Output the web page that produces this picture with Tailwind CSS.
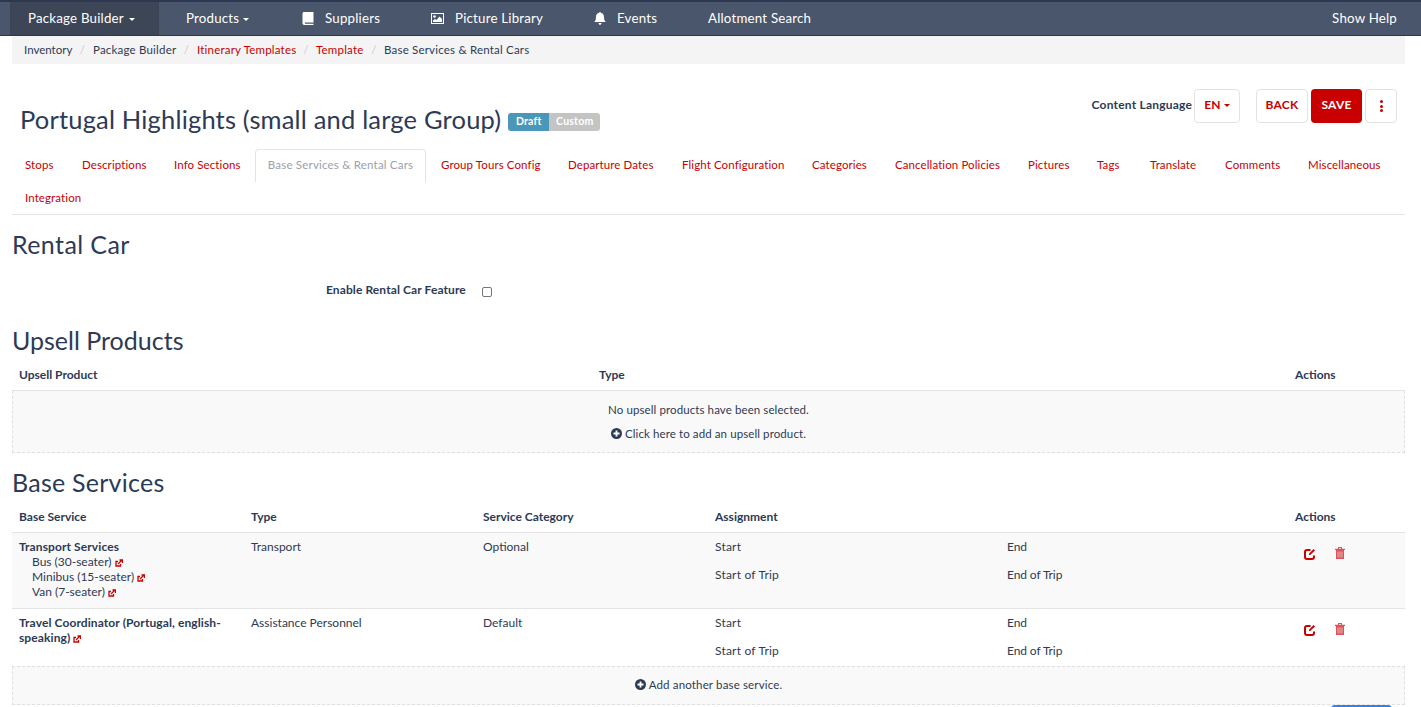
<!DOCTYPE html>
<html lang="en"><head><meta charset="utf-8">
<script src="https://cdn.jsdelivr.net/npm/@tailwindcss/browser@4"></script>
<title>Portugal Highlights</title></head>
<body class="m-0 bg-white overflow-hidden font-['Lato','Noto_Sans',sans-serif] text-[#2d3a55] text-[12px]">
<div class="relative h-[707px] w-[1421px] overflow-hidden">
<nav class="h-[36px] flex items-stretch pl-[10px] pr-[24px] bg-[#4a566b] border-t-2 border-t-[#2c3850] border-b border-b-[#2c3850] text-white text-[13.300px] tracking-[0.2px]">
  <a class="w-[149px] pl-[18px] flex items-center gap-[5px] bg-[#3d4657]">Package Builder <span class="border-x-[3px] border-x-transparent border-t-[3px] border-t-white mt-[2px]"></span></a>
  <a class="w-[118px] pl-[27px] flex items-center gap-[4px]">Products <span class="border-x-[3px] border-x-transparent border-t-[3px] border-t-white mt-[2px]"></span></a>
  <a class="w-[129px] pl-[25px] flex items-center gap-[11px]"><svg class="w-[12px] h-[13px]" viewBox="0 0 12 13"><path fill="#fff" d="M2 0h9.500v10.500H3a1 1 0 0 0 0 1.200h8.500V13H2.500C1 13 .5 12 .5 11V1.500C.5.700 1.200 0 2 0z"/></svg>Suppliers</a>
  <a class="w-[163px] pl-[25px] flex items-center gap-[11px]"><svg class="w-[13px] h-[11px]" viewBox="0 0 13 11"><path fill="#fff" fill-rule="evenodd" d="M0 0h13v11H0zM1 1v9h11V1z"/><circle cx="3.500" cy="3.500" r="1.300" fill="#fff"/><path fill="#fff" d="M2 9V7.500l2-1.500 1.500 1 3-3.500L11 6v3z"/></svg>Picture Library</a>
  <a class="w-[114px] pl-[25px] flex items-center gap-[11px]"><svg class="w-[12px] h-[13px]" viewBox="0 0 12 13"><path fill="#fff" d="M6 0c.5 0 .8.400.8.800C9 1.200 10 3 10 5c0 3 .8 4 1.800 5H.2C1.200 9 2 8 2 5c0-2 1-3.800 3.200-4.200C5.200.4 5.500 0 6 0zM4.500 11h3C7.500 12 6.800 12.800 6 12.800S4.500 12 4.500 11z"/></svg>Events</a>
  <a class="pl-[25px] flex items-center">Allotment Search</a>
  <a class="ml-auto flex items-center">Show Help</a>
</nav>
<main class="px-[12px] w-[1417px]">
  <ol class="h-[28px] bg-[#f4f4f4] flex items-center pl-[12px] text-[11.500px] tracking-[0.2px] whitespace-nowrap">
    <li class="w-[48px] tracking-[0px]">Inventory</li><li class="text-[#ccc] w-[21px] text-center">/</li>
    <li class="w-[83px]">Package Builder</li><li class="text-[#ccc] w-[21px] text-center">/</li>
    <li class="w-[99px] text-[#c80000]">Itinerary Templates</li><li class="text-[#ccc] w-[20px] text-center">/</li>
    <li class="w-[48px] text-[#c80000]">Template</li><li class="text-[#ccc] w-[20px] text-center">/</li>
    <li>Base Services &amp; Rental Cars</li>
  </ol>
  <header class="h-[85px] flex items-start pl-[8px] pr-[8px]">
    <div class="flex items-center mt-[37px] h-[36px]">
      <h1 class="text-[25.500px] leading-[36px] font-normal tracking-[0.18px]">Portugal Highlights (small and large Group)</h1>
      <span class="ml-[7px] mt-[6px] h-[18px] w-[41px] flex items-center justify-center bg-[#4a97b9] text-white font-bold text-[10.500px] tracking-[0.2px] rounded-l-[3px]">Draft</span>
      <span class="mt-[6px] h-[18px] w-[51px] flex items-center justify-center bg-[#c4c4c4] text-white font-bold text-[10.500px] tracking-[0.2px] rounded-r-[3px]">Custom</span>
    </div>
    <div class="ml-auto flex items-center mt-[25px] h-[34px] font-bold tracking-[0.2px]">
      <span class="mr-[2px] pb-[2px]">Content Language</span>
      <span class="w-[46px] h-[34px] pb-[2px] flex items-center justify-center gap-[3px] border border-[#e3e3e3] rounded-[4px] text-[#c80000]">EN <span class="border-x-[3px] border-x-transparent border-t-[3px] border-t-[#c80000]"></span></span>
      <span class="ml-[16px] w-[52px] h-[34px] pb-[2px] flex items-center justify-center border border-[#e3e3e3] rounded-[4px] text-[#c80000]">BACK</span>
      <span class="ml-[3px] w-[51px] h-[34px] pb-[2px] flex items-center justify-center bg-[#c80000] rounded-[4px] text-white">SAVE</span>
      <span class="ml-[3px] w-[32px] h-[34px] flex flex-col items-center justify-center gap-[1.500px] border border-[#e3e3e3] rounded-[4px]"><i class="w-[3px] h-[3px] rounded-full bg-[#c80000]"></i><i class="w-[3px] h-[3px] rounded-full bg-[#c80000]"></i><i class="w-[3px] h-[3px] rounded-full bg-[#c80000]"></i></span>
    </div>
  </header>
  <ul class="flex flex-wrap border-b border-[#e4e4e4] text-[#c80000] text-[11.500px] tracking-[0.1px] h-[66px] content-start">
    <li class="w-[70px] h-[33px] pb-[2px] pl-[13px] flex items-center">Stops</li>
    <li class="w-[92px] h-[33px] pb-[2px] flex items-center">Descriptions</li>
    <li class="w-[81px] h-[33px] pb-[2px] flex items-center">Info Sections</li>
    <li class="w-[171px] h-[33px] pb-[2px] flex items-center justify-center border border-b-0 border-[#e4e4e4] rounded-t-[4px] text-[#9aa0ac] bg-white tracking-[0.2px]">Base Services &amp; Rental Cars</li>
    <li class="w-[142px] h-[33px] pb-[2px] pl-[15px] flex items-center">Group Tours Config</li>
    <li class="w-[114px] h-[33px] pb-[2px] flex items-center">Departure Dates</li>
    <li class="w-[130px] h-[33px] pb-[2px] flex items-center">Flight Configuration</li>
    <li class="w-[83px] h-[33px] pb-[2px] flex items-center">Categories</li>
    <li class="w-[133px] h-[33px] pb-[2px] flex items-center">Cancellation Policies</li>
    <li class="w-[69px] h-[33px] pb-[2px] flex items-center">Pictures</li>
    <li class="w-[53px] h-[33px] pb-[2px] flex items-center">Tags</li>
    <li class="w-[75px] h-[33px] pb-[2px] flex items-center">Translate</li>
    <li class="w-[83px] h-[33px] pb-[2px] flex items-center">Comments</li>
    <li class="w-[84px] h-[33px] pb-[2px] flex items-center">Miscellaneous</li>
    <li class="w-full h-[33px] pb-[2px] pl-[13px] flex items-center">Integration</li>
  </ul>
  <section>
    <h2 class="text-[25px] leading-[30px] font-normal mt-[14px] tracking-[0.4px]">Rental Car</h2>
    <div class="h-[66px] pt-[22px] flex items-start font-bold">
      <span class="ml-[314px] w-[156px] leading-[18px] tracking-[0.1px]">Enable Rental Car Feature</span>
      <span class="mt-[6px] w-[10px] h-[10px] border border-[#767676] rounded-[2px] bg-white"></span>
    </div>
  </section>
  <section>
    <h2 class="text-[25px] leading-[30px] font-normal">Upsell Products</h2>
    <div class="grid grid-cols-[580px_696px_1fr] pl-[7px] h-[36px] pt-[4px] items-center font-bold border-b border-[#e4e4e4]"><span>Upsell Product</span><span>Type</span><span>Actions</span></div>
    <div class="h-[62px] bg-[#f9f9f9] border-x border-b border-dashed border-[#e0e0e0] flex flex-col items-center pt-[12px] gap-[10px] text-[11.500px] tracking-[0.1px]">
      <p class="leading-[14px]">No upsell products have been selected.</p>
      <p class="leading-[14px] flex items-center gap-[3px]"><svg class="w-[11px] h-[11px] mb-[2px]" viewBox="0 0 11 11"><circle cx="5.500" cy="5.500" r="5.500" fill="#2d3a55"/><path stroke="#fff" stroke-width="1.800" d="M2.500 5.500h6M5.500 2.500v6"/></svg>Click here to add an upsell product.</p>
    </div>
  </section>
  <section>
    <h2 class="text-[25px] leading-[30px] font-normal mt-[14px] tracking-[0.25px]">Base Services</h2>
    <div class="grid grid-cols-[232px_232px_232px_292px_288px_1fr] pl-[7px] h-[36px] pt-[5px] items-center font-bold border-b border-[#e4e4e4]"><span>Base Service</span><span>Type</span><span>Service Category</span><span>Assignment</span><span></span><span>Actions</span></div>
    <div class="grid grid-cols-[232px_232px_232px_292px_288px_1fr] pl-[7px] h-[76px] pt-[6px] bg-[#f9f9f9] border-b border-[#e4e4e4] leading-[15px]">
      <div><b class="tracking-[0.1px]">Transport Services</b>
        <div class="pl-[13px]">Bus (30-seater) <svg class="inline w-[8px] h-[8px]" viewBox="0 0 8 8"><path fill="none" stroke="#c80000" stroke-width="1.300" d="M5.500 5v2H1V2.500h2"/><path fill="none" stroke="#c80000" stroke-width="1.300" d="M3 5l3.500-3.500M4.500 1h3v3"/></svg></div>
        <div class="pl-[13px]">Minibus (15-seater) <svg class="inline w-[8px] h-[8px]" viewBox="0 0 8 8"><path fill="none" stroke="#c80000" stroke-width="1.300" d="M5.500 5v2H1V2.500h2"/><path fill="none" stroke="#c80000" stroke-width="1.300" d="M3 5l3.500-3.500M4.500 1h3v3"/></svg></div>
        <div class="pl-[13px]">Van (7-seater) <svg class="inline w-[8px] h-[8px]" viewBox="0 0 8 8"><path fill="none" stroke="#c80000" stroke-width="1.300" d="M5.500 5v2H1V2.500h2"/><path fill="none" stroke="#c80000" stroke-width="1.300" d="M3 5l3.500-3.500M4.500 1h3v3"/></svg></div>
      </div>
      <div>Transport</div><div>Optional</div>
      <div class="flex flex-col gap-[13px] tracking-[0.2px]"><span>Start</span><span>Start of Trip</span></div>
      <div class="flex flex-col gap-[13px] tracking-[-0.1px]"><span>End</span><span>End of Trip</span></div>
      <div class="flex gap-[19px] pl-[9px] pt-[9px] items-start">
        <svg class="w-[12px] h-[12px]" viewBox="0 0 12 12"><path fill="none" stroke="#c80000" stroke-width="2" d="M10 7.500V9a2 2 0 0 1-2 2H3a2 2 0 0 1-2-2V4a2 2 0 0 1 2-2h3.500"/><path fill="#c80000" d="M5 5.800l4.500-4.800 1.500 1.500-4.800 4.500H5z"/></svg>
        <svg class="w-[10px] h-[12px] -mt-[1px]" viewBox="0 0 10 12"><path fill="#d9545a" d="M0 1.800h10v1.200H0zM3 0h4v1.800H6V1H4v.8H3zM1 3h8v9H1z"/><path stroke="#f0b4b7" stroke-width="1" d="M3 4.500v6M5 4.500v6M7 4.500v6"/></svg>
      </div>
    </div>
    <div class="grid grid-cols-[232px_232px_232px_292px_288px_1fr] pl-[7px] h-[57px] pt-[6px] leading-[15px]">
      <div class="font-bold w-[215px] tracking-[0.1px]">Travel Coordinator (Portugal, english-speaking) <svg class="inline w-[8px] h-[8px]" viewBox="0 0 8 8"><path fill="none" stroke="#c80000" stroke-width="1.300" d="M5.500 5v2H1V2.500h2"/><path fill="none" stroke="#c80000" stroke-width="1.300" d="M3 5l3.500-3.500M4.500 1h3v3"/></svg></div>
      <div>Assistance Personnel</div><div>Default</div>
      <div class="flex flex-col gap-[13px] tracking-[0.2px]"><span>Start</span><span>Start of Trip</span></div>
      <div class="flex flex-col gap-[13px] tracking-[-0.1px]"><span>End</span><span>End of Trip</span></div>
      <div class="flex gap-[19px] pl-[9px] pt-[9px] items-start">
        <svg class="w-[12px] h-[12px]" viewBox="0 0 12 12"><path fill="none" stroke="#c80000" stroke-width="2" d="M10 7.500V9a2 2 0 0 1-2 2H3a2 2 0 0 1-2-2V4a2 2 0 0 1 2-2h3.500"/><path fill="#c80000" d="M5 5.800l4.500-4.800 1.500 1.500-4.800 4.500H5z"/></svg>
        <svg class="w-[10px] h-[12px] -mt-[1px]" viewBox="0 0 10 12"><path fill="#d9545a" d="M0 1.800h10v1.200H0zM3 0h4v1.800H6V1H4v.8H3zM1 3h8v9H1z"/><path stroke="#f0b4b7" stroke-width="1" d="M3 4.500v6M5 4.500v6M7 4.500v6"/></svg>
      </div>
    </div>
    <div class="h-[39px] pb-[2px] bg-[#f9f9f9] border border-dashed border-[#e0e0e0] flex items-center justify-center gap-[3px] text-[11.500px] tracking-[0.15px]"><svg class="w-[11px] h-[11px]" viewBox="0 0 11 11"><circle cx="5.500" cy="5.500" r="5.500" fill="#2d3a55"/><path stroke="#fff" stroke-width="1.800" d="M2.500 5.500h6M5.500 2.500v6"/></svg>Add another base service.</div>
  </section>
</main>
<div class="absolute left-[1331px] top-[705px] w-[61px] h-[8px] bg-[#2f80ed] rounded-t-[4px]"></div>
</div>
</body></html>
